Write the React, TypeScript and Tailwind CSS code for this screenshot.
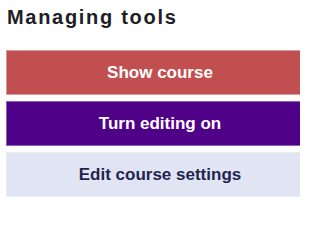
const buttons = [
  { label: 'Show course', cls: 'bg-[#c24f50] border-[#d69a9c] text-white' },
  { label: 'Turn editing on', cls: 'bg-[#4f0188] border-[#8a63b8] text-white' },
  { label: 'Edit course settings', cls: 'bg-[#e1e5f3] border-[#e9ecf6] text-[#1f2550]' },
];

export default function App() {
  return (
    <div
      className="w-[300px] h-[202px] overflow-hidden bg-white"
      style={{ fontFamily: '"Liberation Sans", Arial, sans-serif' }}
    >
      <h2 className="pl-[7px] pt-[6px] text-[20px] leading-[23px] font-bold tracking-[1.7px] text-[#1d2125]">
        Managing tools
      </h2>

      {/* Managing tools actions */}
      <div className="mt-[21px] pl-[6px] flex flex-col gap-[6px]">
        {buttons.map(b => (
          <button
            key={b.label}
            className={`w-[308px] h-[45px] border flex items-center justify-center text-[17px] font-bold ${b.cls}`}
          >
            {b.label}
          </button>
        ))}
      </div>
    </div>
  );
}
